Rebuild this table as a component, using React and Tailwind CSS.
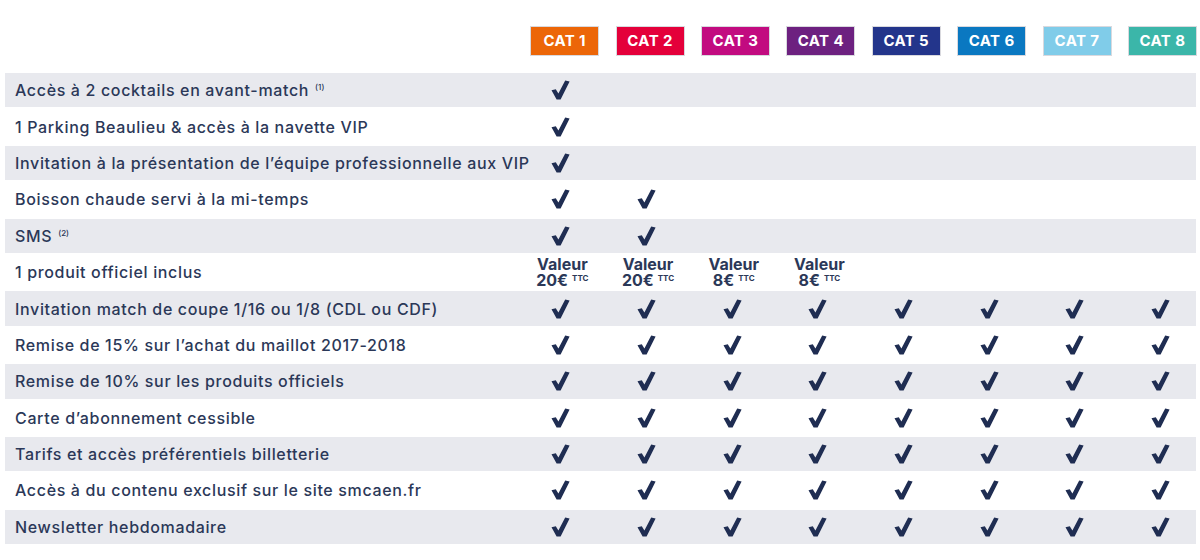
import React from 'react';

const cats = [
  { label: 'CAT 1', bg: 'bg-[#ec6608]' },
  { label: 'CAT 2', bg: 'bg-[#e4003a]' },
  { label: 'CAT 3', bg: 'bg-[#c20b80]' },
  { label: 'CAT 4', bg: 'bg-[#6d2180]' },
  { label: 'CAT 5', bg: 'bg-[#23358b]' },
  { label: 'CAT 6', bg: 'bg-[#0a78c1]' },
  { label: 'CAT 7', bg: 'bg-[#80cce9]' },
  { label: 'CAT 8', bg: 'bg-[#3bb6a9]' },
];

// n = how many categories get the check (always from CAT 1)
const rows = [
  { label: 'Accès à 2 cocktails en avant-match', note: '(1)', n: 1 },
  { label: '1 Parking Beaulieu & accès à la navette VIP', n: 1 },
  { label: 'Invitation à la présentation de l’équipe professionnelle aux VIP', n: 1 },
  { label: 'Boisson chaude servi à la mi-temps', n: 2 },
  { label: 'SMS', note: '(2)', n: 2 },
  { label: '1 produit officiel inclus', values: ['20€', '20€', '8€', '8€'] },
  { label: 'Invitation match de coupe 1/16 ou 1/8 (CDL ou CDF)', n: 8 },
  { label: 'Remise de 15% sur l’achat du maillot 2017-2018', n: 8 },
  { label: 'Remise de 10% sur les produits officiels', n: 8 },
  { label: 'Carte d’abonnement cessible', n: 8 },
  { label: 'Tarifs et accès préférentiels billetterie', n: 8 },
  { label: 'Accès à du contenu exclusif sur le site smcaen.fr', n: 8 },
  { label: 'Newsletter hebdomadaire', n: 8 },
];

const Check = () => (
  <svg width="19" height="20" viewBox="0 0 19 20" className="text-[#1f2d52]">
    <path d="M0.5 10.2 L4.8 9.2 L7.4 13.6 L14.2 0.6 L18.6 1.6 L9.6 19.4 L5.6 19.4 Z" fill="currentColor" />
  </svg>
);

export default function App() {
  return (
    <div className="w-[1200px] h-[560px] bg-white text-[#2b3858] font-['Inter',sans-serif] overflow-hidden">
      {/* category header */}
      <div className="flex pl-[522px] pt-[26px] h-[72px]">
        {cats.map((c) => (
          <div key={c.label} className="w-[85.4px] shrink-0 flex justify-center">
            <div className={`${c.bg} w-[69px] h-[30px] border border-[#d9d9de] flex items-center justify-center text-white text-[15px] font-bold tracking-[0.4px]`}>
              {c.label}
            </div>
          </div>
        ))}
      </div>

      {/* rows */}
      <div className="pl-[5px] w-[1196px]">
        {rows.map((r, i) => (
          <div
            key={r.label}
            className={`flex items-center h-[36.4px] border-y border-white ${i % 2 === 0 ? 'bg-[#e8e9ee]' : 'bg-white'}`}
          >
            <div className="w-[513px] shrink-0 pl-[10px] text-[16px] font-medium tracking-[0.65px] whitespace-nowrap">
              {r.label}
              {r.note && <sup className="text-[8px] ml-[6px] -top-[6px] tracking-normal">{r.note}</sup>}
            </div>
            {cats.map((c, j) => (
              <div key={c.label} className="w-[85.7px] shrink-0 flex justify-center items-center">
                {r.values
                  ? r.values[j] && (
                      <div className="text-center font-bold text-[16px] leading-[16px] pl-[3px]">
                        <div>Valeur</div>
                        <div>
                          {r.values[j]}
                          <span className="text-[8px] leading-none ml-[4px] relative -top-[5px]">TTC</span>
                        </div>
                      </div>
                    )
                  : j < r.n && <Check />}
              </div>
            ))}
          </div>
        ))}
      </div>
    </div>
  );
}
